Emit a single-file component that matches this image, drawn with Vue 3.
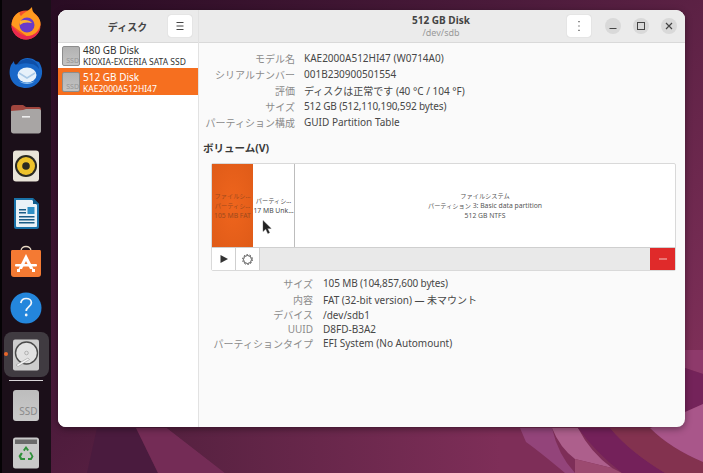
<script setup>
const discos = [
  { id: 1, nombre: '480 GB Disk', modelo: 'KIOXIA-EXCERIA SATA SSD', activo: false },
  { id: 2, nombre: '512 GB Disk', modelo: 'KAE2000A512HI47', activo: true }
]

const infoDisco = [
  ['モデル名', 'KAE2000A512HI47 (W0714A0)'],
  ['シリアルナンバー', '001B230900501554'],
  ['評価', 'ディスクは正常です (40 °C / 104 °F)'],
  ['サイズ', '512 GB (512,110,190,592 bytes)'],
  ['パーティション構成', 'GUID Partition Table']
]

const infoVolumen = [
  ['サイズ', '105 MB (104,857,600 bytes)'],
  ['内容', 'FAT (32-bit version) — 未マウント'],
  ['デバイス', '/dev/sdb1'],
  ['UUID', 'D8FD-B3A2'],
  ['パーティションタイプ', 'EFI System (No Automount)']
]

const esCifra = (texto) => texto.endsWith('bytes)')
</script>

<template>
  <div class="escritorio">
    <svg class="fondo" width="703" height="473" viewBox="0 0 703 473">
      <defs>
        <linearGradient id="gradFondo" x1="0" y1="0" x2="1" y2="0.75">
          <stop offset="0" stop-color="#250a20" />
          <stop offset="0.45" stop-color="#4a1a3a" />
          <stop offset="1" stop-color="#7e2f58" />
        </linearGradient>
        <linearGradient id="gradBase" gradientUnits="userSpaceOnUse" x1="167" y1="0" x2="500" y2="0">
          <stop offset="0" stop-color="#562140" />
          <stop offset="1" stop-color="#7e2e58" />
        </linearGradient>
      </defs>
      <rect width="703" height="473" fill="url(#gradFondo)" />
      <polygon points="97,428 136,428 158,473 87,473" fill="#4a1b3e" />
      <polygon points="136,428 167,428 225,473 158,473" fill="#742c56" />
      <polygon points="167,428 703,428 703,473 225,473" fill="url(#gradBase)" />
      <path d="M520,428 L552,428 Q558,455 575,473 L565,473 Q540,452 526,442 Z" fill="#93447a" />
      <path d="M552,428 L578,428 Q590,452 612,468 L575,459 Q560,448 552,428 Z" fill="#ad5f8c" />
      <path d="M575,459 L612,468 L622,473 L575,473 Z" fill="#9c4a70" />
      <path d="M578,428 L610,428 Q630,452 665,473 L622,473 Q595,452 578,428 Z" fill="#74215a" />
      <path d="M610,428 L650,428 Q670,448 703,462 L703,473 L665,473 Q630,452 610,428 Z" fill="#83324f" />
      <path d="M650,428 L685,415 L703,428 L703,462 Q670,448 650,428 Z" fill="#a9568a" />
      <polygon points="685,350 703,350 703,374 685,368" fill="#8e3a6b" />
      <polygon points="685,368 703,374 703,404 685,412" fill="#74235a" />
      <polygon points="685,412 703,404 703,428 685,428" fill="#a9568a" />
    </svg>

    <aside class="dock">
      <div class="dock-item">
        <svg width="36" height="36" viewBox="0 0 36 36">
          <circle cx="18" cy="19" r="14.5" fill="#f4502c" />
          <path d="M3.5 19C4 12 8 7 12 6c-1 2 0 3 1 4 3-4 8-5 11-9 0 3 1 5 3 7 4 3 6 7 5.500 11-2 6-6 11-14 11" fill="#ff9a1f" />
          <path d="M3.500 19c0 8 6.500 14.500 14.500 14.500 7 0 13-5 14.300-12-3 7-10 10-16 8-5-1.500-9-5-12.800-10.500z" fill="#e8284f" />
          <circle cx="19" cy="19" r="7.500" fill="#6a3bc9" />
          <path d="M12 15c4-2 10-1 12 2-4-1-9-1-12 2z" fill="#ffb52e" />
        </svg>
      </div>
      <div class="dock-item">
        <svg width="36" height="36" viewBox="0 0 36 36">
          <path d="M3 12c-2 5-2 11 1 16 3 5 9 7 14 7 8 0 15-6 16-14 .5-4-.5-8-3-12l-3-1c-4-3-12-5-17 1C8 13 6 12 6 8z" fill="#1867c8" />
          <path d="M9 12c3-6 12-8 17-4 3 2 5 5 5 8-2-3-5-5-8-5-6-2-11 0-14 1z" fill="#0e4fa8" />
          <ellipse cx="19" cy="22" rx="9.500" ry="7.500" fill="#e6f1fa" />
          <path d="M11 20l8 5 8-5" fill="none" stroke="#a9c9e6" stroke-width="1.500" />
          <path d="M11 28c4 4 12 4 16 0-4 2-12 2-16 0z" fill="#8fc1ee" />
        </svg>
      </div>
      <div class="dock-item">
        <svg width="36" height="36" viewBox="0 0 36 36">
          <path d="M3 7c0-2 1-3 3-3h9l3 2h13c1.500 0 2 1 2 3v6H3z" fill="#a0463e" />
          <path d="M3 10l12-1 3-1h13c1.500 0 2 1 2 2v20c0 1.500-1 2.500-2.500 2.500h-25C4 32.500 3 31.500 3 30z" fill="#a8a5a4" />
          <rect x="14" y="15" width="8" height="1.600" fill="#eeeeee" />
        </svg>
      </div>
      <div class="dock-item">
        <svg width="36" height="36" viewBox="0 0 36 36">
          <rect x="5" y="2.500" width="26" height="31" rx="3" fill="#e9e4d8" />
          <circle cx="18" cy="18" r="11" fill="#2a2a22" />
          <circle cx="18" cy="18" r="9" fill="#eec32c" />
          <circle cx="18" cy="18" r="3.800" fill="#2a2a22" />
        </svg>
      </div>
      <div class="dock-item">
        <svg width="36" height="36" viewBox="0 0 36 36">
          <path d="M6 3h19l6 6v23c0 1-1 2-2 2H8c-1 0-2-1-2-2z" fill="#1a72a8" />
          <path d="M8 5h16l5 5v21c0 .500-.500 1-1 1H9c-.500 0-1-.500-1-1z" fill="#e9f2f7" />
          <path d="M25 3l6 6h-6z" fill="#0f5c8c" />
          <rect x="11" y="14" width="7" height="1.500" fill="#1a5c86" />
          <rect x="11" y="17" width="7" height="1.500" fill="#1a5c86" />
          <rect x="19.500" y="12" width="7" height="7" fill="#2f8fc4" />
          <rect x="11" y="21" width="15.500" height="1.500" fill="#1a5c86" />
          <rect x="11" y="24" width="15.500" height="1.500" fill="#1a5c86" />
          <rect x="11" y="27" width="15.500" height="1.500" fill="#1a5c86" />
        </svg>
      </div>
      <div class="dock-item">
        <svg width="36" height="36" viewBox="0 0 36 36">
          <path d="M13 8c0-6 10-6 10 0" fill="none" stroke="#e8d8c4" stroke-width="1.300" />
          <path d="M3 8.500c0-1 .500-1.500 1.500-1.500h27c1 0 1.500.500 1.500 1.500V31c0 2-1 3-3 3H6c-2 0-3-1-3-3z" fill="#f47a33" />
          <path d="M18 11l7.500 15h-3.500l-4-8-4 8h-3.500z" fill="#fff" />
          <rect x="7" y="21" width="22" height="2.600" rx="1" fill="#fff" />
          <rect x="9" y="26" width="3" height="3" fill="#fff" />
          <rect x="24" y="26" width="3" height="3" fill="#fff" />
        </svg>
      </div>
      <div class="dock-item">
        <svg width="36" height="36" viewBox="0 0 36 36">
          <circle cx="18" cy="18" r="15.500" fill="#2486dc" />
          <path d="M12.800 13c.5-3 2.600-4.500 5.400-4.500 3 0 5.200 1.800 5.200 4.300 0 3.700-5.200 3.900-5.200 8.200" fill="none" stroke="#f2f6fa" stroke-width="1.700" />
          <circle cx="18.200" cy="25" r="1.400" fill="#f2f6fa" />
        </svg>
      </div>
      <div class="dock-item activo">
        <span class="punto"></span>
        <span class="resalte"></span>
        <svg class="sobre" width="36" height="36" viewBox="0 0 36 36">
          <rect x="5" y="2.500" width="26" height="31" rx="2" fill="#cdcdcd" />
          <circle cx="18.500" cy="16" r="11" fill="#e2e2e2" stroke="#4a4a4a" stroke-width="1.400" />
          <circle cx="18.500" cy="16" r="1.800" fill="none" stroke="#a5a5a5" stroke-width="0.800" />
          <path d="M8 28l12-7 1.500 1.500L10 29.500z" fill="#f4f4f4" stroke="#777" stroke-width="0.400" />
        </svg>
      </div>
      <div class="separador"></div>
      <div class="dock-item">
        <div class="ssd ssd-grande">SSD</div>
      </div>
      <div class="dock-item">
        <svg width="36" height="36" viewBox="0 0 36 36">
          <rect x="5" y="2.500" width="26" height="31" rx="2.500" fill="#c9c9c9" />
          <rect x="7" y="4.500" width="22" height="4.500" fill="#6b6b6b" />
          <path d="M15 15l3-4 3 4-1.800 1L18 14l-1.400 2.200zM23 17l2.500 4.500-2 3.500H20v-2h2.500l1-1.700-2.200-3.500zM13 17.500l1.800 1-1.800 3 1 1.500h3v2h-4.500L10.500 21z" fill="#2f8f3a" />
        </svg>
      </div>
    </aside>

    <main class="ventana">
      <section class="lateral">
        <header class="cabecera-lateral">
          <span class="titulo-lateral">ディスク</span>
          <button class="btn-cab menu-lateral">
            <svg width="10" height="8" viewBox="0 0 10 8"><path d="M1.500 .500h7M1.500 4h7M1.500 7.500h7" stroke="#444" stroke-width="1" /></svg>
          </button>
        </header>
        <ul class="lista-discos">
          <li v-for="disco in discos" :key="disco.id" class="disco" :class="{ seleccionado: disco.activo }">
            <div class="ssd">SSD</div>
            <div class="disco-texto">
              <div class="disco-nombre">{{ disco.nombre }}</div>
              <div class="disco-modelo">{{ disco.modelo }}</div>
            </div>
          </li>
        </ul>
      </section>

      <section class="contenido">
        <header class="cabecera">
          <div class="titulo-centro">
            <div class="titulo">512 GB Disk</div>
            <div class="subtitulo">/dev/sdb</div>
          </div>
          <button class="btn-cab">
            <svg width="4" height="12" viewBox="0 0 4 12"><path d="M2 1v1.200M2 5.400v1.200M2 9.800v1.200" stroke="#444" stroke-width="1.200" /></svg>
          </button>
          <div class="controles">
            <span class="control"><svg width="10" height="10" viewBox="0 0 10 10"><path d="M1.500 7.500h7" stroke="#444" stroke-width="1.200" /></svg></span>
            <span class="control"><svg width="10" height="10" viewBox="0 0 10 10"><rect x="1.500" y="1.500" width="7" height="7" fill="none" stroke="#444" stroke-width="1" /></svg></span>
            <span class="control"><svg width="10" height="10" viewBox="0 0 10 10"><path d="M2 2l6 6M8 2l-6 6" stroke="#444" stroke-width="1.200" /></svg></span>
          </div>
        </header>

        <div class="cuerpo">
          <div class="tabla-info tabla-disco">
            <template v-for="fila in infoDisco" :key="fila[0]">
              <span class="etiqueta">{{ fila[0] }}</span>
              <span class="valor" :class="{ cifras: esCifra(fila[1]) }">{{ fila[1] }}</span>
            </template>
          </div>

          <h2 class="volumenes">ボリューム(V)</h2>

          <div class="caja-volumenes">
            <div class="particiones">
              <div class="particion naranja">
                <div class="kana">ファイルシ…</div>
                <div class="kana">パーティシ…</div>
                <div>105 MB FAT</div>
              </div>
              <div class="particion media">
                <div class="kana">パーティシ…</div>
                <div>17 MB Unk…</div>
              </div>
              <div class="particion grande">
                <div class="kana">ファイルシステム</div>
                <div><span class="kana">パーティション</span> 3: Basic data partition</div>
                <div>512 GB NTFS</div>
              </div>
            </div>
            <div class="barra">
              <button class="btn-barra">
                <svg width="10" height="10" viewBox="0 0 10 10"><path d="M1.500 1l7.500 4-7.500 4z" fill="#333" /></svg>
              </button>
              <button class="btn-barra">
                <svg width="13" height="13" viewBox="0 0 13 13">
                  <circle cx="6.500" cy="6.500" r="4" fill="none" stroke="#555" stroke-width="1" />
                  <circle cx="6.500" cy="6.500" r="5" fill="none" stroke="#555" stroke-width="1" stroke-dasharray="1.500 1.640" />
                </svg>
              </button>
              <div class="hueco"></div>
              <button class="btn-quitar">
                <svg width="8" height="2" viewBox="0 0 8 2"><path d="M0 1h8" stroke="#f4c4c0" stroke-width="1" /></svg>
              </button>
            </div>
          </div>

          <div class="tabla-info tabla-volumen">
            <template v-for="fila in infoVolumen" :key="fila[0]">
              <span class="etiqueta">{{ fila[0] }}</span>
              <span class="valor" :class="{ cifras: esCifra(fila[1]) }">{{ fila[1] }}</span>
            </template>
          </div>
        </div>
      </section>
    </main>

    <svg class="cursor" width="10" height="15" viewBox="0 0 10 15">
      <path d="M1 .500v11l2.800-2.400 2 4.400 1.800-.8-2-4.200h3.600z" fill="#222" stroke="#555" stroke-width="0.400" />
    </svg>
  </div>
</template>

<style>
html, body {
  margin: 0;
  overflow: hidden;
}
</style>

<style scoped>
.escritorio {
  position: relative;
  width: 703px;
  height: 473px;
  overflow: hidden;
  display: flex;
  font-family: "Noto Sans", "Noto Sans CJK JP", sans-serif;
  color: #3d3d3d;
}

.fondo {
  position: absolute;
  left: 0;
  top: 0;
}

.dock {
  position: relative;
  width: 51px;
  height: 473px;
  padding-top: 0.4px;
  box-sizing: border-box;
  border-left: 2px solid #050305;
  background-color: #1b0f19;
  flex-shrink: 0;
  display: flex;
  flex-direction: column;
}

.dock-item {
  position: relative;
  height: 47.3px;
  flex-shrink: 0;
  display: flex;
  align-items: center;
  justify-content: center;
  margin-left: -2px;
  width: 51px;
}

.dock-item svg {
  display: block;
}

.resalte {
  position: absolute;
  left: 4px;
  top: 1px;
  width: 45px;
  height: 45px;
  border-radius: 8px;
  background-color: #403b41;
}

.sobre {
  position: relative;
}

.punto {
  position: absolute;
  z-index: 1;
  left: 4px;
  top: 21px;
  width: 4px;
  height: 4px;
  border-radius: 50%;
  background-color: #e9662a;
}

.separador {
  height: 1px;
  margin: 1px 8px 1px 7px;
  background-color: #d9d6d8;
  flex-shrink: 0;
}

.ssd {
  width: 18px;
  height: 20px;
  box-sizing: border-box;
  flex-shrink: 0;
  border-radius: 2px;
  border: 1px solid #8d8d8d;
  background: linear-gradient(#b2b2b2, #c4c4c4);
  color: #969696;
  font-size: 7px;
  line-height: 9px;
  text-align: right;
  display: flex;
  align-items: flex-end;
  justify-content: flex-end;
}

.ssd-grande {
  width: 26px;
  height: 31px;
  border: none;
  border-radius: 3px;
  font-size: 10px;
  line-height: 14px;
  padding: 0 1px 3px 0;
  background: linear-gradient(#bdbdbd, #c9c9c9);
  color: #8a8a8a;
}

.ventana {
  position: relative;
  margin: 10px 0 0 7px;
  width: 627px;
  height: 417px;
  display: flex;
  border-radius: 9px 9px 8px 8px;
  overflow: hidden;
  background-color: #fafafa;
  box-shadow: 0 2px 7px rgba(0, 0, 0, 0.4);
}

.lateral {
  width: 140px;
  flex-shrink: 0;
  background-color: #fff;
  border-right: 1px solid #e2e2e2;
}

.cabecera-lateral {
  position: relative;
  height: 32px;
  background-color: #ebebeb;
  border-bottom: 1px solid #d9d9d9;
  display: flex;
  align-items: center;
  justify-content: center;
}

.titulo-lateral {
  font-size: 10px;
  font-weight: 700;
  color: #444;
  margin-right: 1px;
}

.btn-cab {
  width: 24px;
  height: 22px;
  padding: 0;
  border: none;
  border-radius: 3px;
  background-color: #fff;
  display: flex;
  align-items: center;
  justify-content: center;
  box-shadow: 0 0 1px rgba(0, 0, 0, 0.25);
}

.menu-lateral {
  position: absolute;
  right: 6px;
  top: 5px;
}

.lista-discos {
  list-style: none;
  margin: 0;
  padding: 0;
}

.disco {
  height: 25px;
  box-sizing: border-box;
  display: flex;
  align-items: center;
  gap: 3px;
  padding-left: 4px;
  color: #333;
}

.seleccionado {
  height: 27px;
  padding-top: 1px;
  background-color: #f66f1f;
  color: #fff;
}

.disco-nombre {
  font-size: 10px;
  line-height: 12px;
}

.disco-modelo {
  font-size: 8.5px;
  line-height: 11px;
}

.contenido {
  flex: 1;
  min-width: 0;
}

.cabecera {
  position: relative;
  height: 32px;
  background-color: #ebebeb;
  border-bottom: 1px solid #d9d9d9;
  display: flex;
  align-items: center;
  justify-content: flex-end;
  padding-right: 8px;
  gap: 14px;
}

.titulo-centro {
  position: absolute;
  left: 0;
  right: 0;
  top: 3px;
  text-align: center;
  padding-right: 2px;
}

.titulo {
  font-size: 10px;
  font-weight: 700;
  line-height: 14px;
  color: #444;
}

.subtitulo {
  font-size: 9px;
  line-height: 12px;
  color: #999;
}

.controles {
  display: flex;
  gap: 12px;
}

.control {
  width: 16px;
  height: 16px;
  border-radius: 50%;
  background-color: #d9d9d9;
  display: flex;
  align-items: center;
  justify-content: center;
}

.cuerpo {
  padding: 7px 9px 0 4px;
}

.tabla-info {
  display: grid;
  font-size: 10px;
  align-items: center;
}

.tabla-disco {
  grid-template-columns: 92px auto;
  column-gap: 9px;
  grid-auto-rows: 16px;
}

.tabla-volumen {
  margin: 4px 0 0 8px;
  grid-template-columns: 102px auto;
  column-gap: 10px;
  grid-template-rows: 16px 16px 15px 14px 14px;
}

.etiqueta {
  text-align: right;
  white-space: nowrap;
  color: #8b8b8b;
}

.valor {
  white-space: nowrap;
  color: #474747;
}

.cifras {
  letter-spacing: -0.14px;
}

.volumenes {
  margin: 11px 0 8px;
  font-size: 10.5px;
  line-height: 14px;
  font-weight: 700;
  color: #3a3a3a;
}

.caja-volumenes {
  width: 465px;
  margin-left: 8px;
  border: 1px solid #d9d9d9;
  border-radius: 2px;
  box-sizing: border-box;
  background-color: #fff;
}

.particiones {
  height: 84px;
  box-sizing: border-box;
  display: flex;
  border-bottom: 1px solid #cfcfcf;
}

.particion {
  box-sizing: border-box;
  display: flex;
  flex-direction: column;
  align-items: center;
  justify-content: center;
  font-size: 6.8px;
  line-height: 10px;
  color: #555;
  white-space: nowrap;
}

.kana {
  font-size: 6.2px;
}

.naranja {
  width: 41px;
  background: radial-gradient(ellipse at center, #ef651d, #df5b18);
  color: #9e4a1c;
}

.media {
  width: 42px;
  border-right: 1px solid #bdbdbd;
  color: #4c4c4c;
}

.grande {
  flex: 1;
}

.barra {
  height: 22px;
  display: flex;
  background-color: #e9e9e9;
}

.btn-barra {
  width: 24px;
  padding: 0;
  border: none;
  border-right: 1px solid #cfcfcf;
  background-color: #fff;
  display: flex;
  align-items: center;
  justify-content: center;
}

.hueco {
  flex: 1;
}

.btn-quitar {
  width: 25px;
  padding: 0;
  border: none;
  background-color: #e02a2a;
  display: flex;
  align-items: center;
  justify-content: center;
}

.cursor {
  position: absolute;
  left: 262px;
  top: 220px;
}
</style>
